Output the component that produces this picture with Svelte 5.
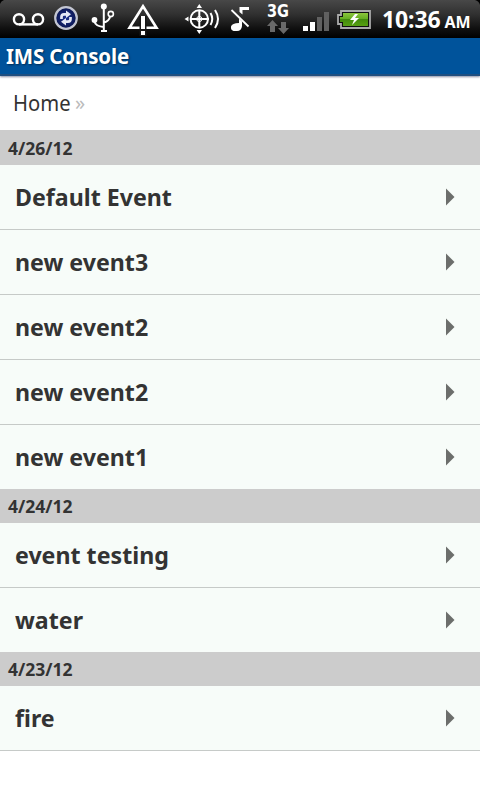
<script>
  const groups = [
    { date: '4/26/12', events: ['Default Event', 'new event3', 'new event2', 'new event2', 'new event1'] },
    { date: '4/24/12', events: ['event testing', 'water'] },
    { date: '4/23/12', events: ['fire'] }
  ];
</script>

<div class="screen">
  <div class="status">
    <svg class="icons" width="376" height="38" viewBox="0 0 376 38">
      <defs>
        <linearGradient id="charge" x1="0" y1="0" x2="0" y2="1">
          <stop offset="0" stop-color="#8cc63c" /><stop offset=".45" stop-color="#65ad22" />
          <stop offset=".5" stop-color="#438b0c" /><stop offset="1" stop-color="#56a012" />
        </linearGradient>
        <radialGradient id="globe"><stop offset="0" stop-color="#20358f" /><stop offset="1" stop-color="#0a1550" /></radialGradient>
      </defs>
      <path d="M0 0H4Q1 1 0 4Z" fill="#000" />
      <g fill="none" stroke="#fff" stroke-width="2.4">
        <circle cx="19" cy="19.3" r="5.1" /><circle cx="38" cy="19.3" r="5.1" /><path d="M19 24.4H38" />
      </g>
      <circle cx="66" cy="18" r="10.8" fill="url(#globe)" stroke="#c3c6d2" stroke-width="2.2" />
      <g fill="none" stroke="#e4e8f5" stroke-width="2.7">
        <path d="M61.500 19V17Q61.500 14.300 64 14.300H67M70.500 17V19Q70.500 21.700 68 21.700H65" />
      </g>
      <path d="M66 10.500L71 14.300L66 18ZM66 18L61 21.700L66 25.500Z" fill="#e4e8f5" />
      <g fill="none" stroke="#fff" stroke-width="2">
        <path d="M103.800 7V31M94.500 21Q95 26 103.500 27M110 17Q109 21 104 22.500" />
        <circle cx="110.800" cy="14" r="2.600" stroke-width="1.600" />
      </g>
      <circle cx="103.800" cy="6.500" r="3" fill="#fff" /><circle cx="94.500" cy="20" r="2.900" fill="#fff" />
      <path d="M101 30H107V32H101Z" fill="#fff" />
      <path d="M143 6.300L156.500 27.700H129.500Z" fill="none" stroke="#fff" stroke-width="2.600" />
      <path d="M139.500 16H146.500V36H139.500Z" fill="#171717" />
      <path d="M141 16H145V29H141ZM141 31H145V35H141Z" fill="#fff" />
      <g fill="none" stroke="#fff" stroke-width="2">
        <circle cx="199.300" cy="19" r="8.700" /><path d="M190 19H209M199.300 10V28" />
        <circle cx="199.300" cy="19" r="2.600" stroke-width="1" />
        <path d="M210.500 13Q214 19 210.500 25M215 10Q221 19 215 28" />
      </g>
      <path d="M199.300 4L202 8H196.600ZM199.300 34L202 30H196.600ZM184.500 19L188.500 16.500V21.500Z" fill="#fff" />
      <path d="M231.500 10L248.500 26.500" stroke="#fff" stroke-width="1.800" />
      <path d="M239.500 7H249V10H242.500V14.500L239.500 12ZM239 18.500L242 21.500V26Q241.500 31 237 31H233.500Q230.500 30 231 26.500Q232 23 239 23Z" fill="#fff" />
      <text x="267" y="17" textLength="22" lengthAdjust="spacingAndGlyphs" class="network">3G</text>
      <path d="M272.500 20L278 26H275V32H270V26H267ZM281 22H286V28H289L283.500 34L278 28H281Z" fill="#696969" />
      <path d="M303 26H308V31H303ZM310 22H315V31H310Z" fill="#fff" />
      <path d="M317 17H322V31H317ZM324 12H329V31H324Z" fill="#606060" />
      <path d="M341 11H370V28H341V24H338V15H341Z" fill="#111" stroke="#aaa" stroke-width="1.800" />
      <path d="M343 13H368V26H343V22H340V17H343Z" fill="url(#charge)" />
      <path d="M355 14L350 20H354L352 25L359 18H355L358 14Z" fill="#fff" />
    </svg>
    <div class="clock"><span class="time">10:36</span><span class="ampm">AM</span></div>
    <svg class="corner" width="5" height="5" viewBox="0 0 5 5"><path d="M0 0H5V5Q4 1 0 0Z" fill="#000" /></svg>
  </div>
  <header><h1>IMS Console</h1></header>
  <nav><span class="home">Home</span><span class="sep">»</span></nav>
  <main>
    {#each groups as group}
      <section>
        <h2><span>{group.date}</span></h2>
        <ul>
          {#each group.events as event}
            <li>
              <span class="name">{event}</span>
              <svg width="10" height="18" viewBox="0 0 10 18"><path d="M1 .5L9.500 9L1 17.500Z" fill="#6c6e6c" /></svg>
            </li>
          {/each}
        </ul>
      </section>
    {/each}
  </main>
</div>

<style>
  :global(body) { margin: 0; background: #fff; }
  .screen { width: 480px; height: 800px; overflow: hidden; background: #fff; color: #333; font-family: "Noto Sans", "Open Sans", sans-serif; }
  .status { position: relative; display: flex; height: 38px; background: linear-gradient(#484848, #303030 38%, #101010 75%, #000); }
  .icons { flex: none; }
  .network { fill: #fff; font: 700 17.5px "DejaVu Sans", sans-serif; }
  .corner { position: absolute; top: 0; right: 0; }
  .clock { display: flex; align-items: baseline; padding-left: 6px; color: #fff; font-weight: 700; line-height: 39px; white-space: nowrap; }
  .time { width: 62.5px; font-size: 23px; letter-spacing: -.1px; }
  .ampm { font-size: 16px; letter-spacing: -.1px; }
  header { box-sizing: border-box; height: 38px; padding-left: 6px; background: #00539b; border-bottom: 2px solid #204f80; box-shadow: 0 1px 2px #8a8fa4; }
  h1 { margin: 0; font-size: 20.5px; line-height: 36px; letter-spacing: -.15px; color: #fff; text-shadow: 1px 1px 2px #002c55; }
  nav { display: flex; align-items: center; height: 52px; padding: 0 0 2px 13px; }
  .home { width: 62px; font-size: 22px; transform: scaleX(.92); transform-origin: 0 50%; }
  .sep { font-size: 20px; color: #bbb; }
  h2 { display: flex; align-items: center; height: 34px; margin: 0; padding-left: 8px; background: #ccc; font-size: 17.5px; }
  section:first-child h2 { height: 35px; }
  ul { margin: 0; padding: 0; list-style: none; }
  li { box-sizing: border-box; display: flex; align-items: center; justify-content: space-between; height: 65px; padding: 0 25px 0 15px; background: #f7fcf9; border-bottom: 1px solid #c6cac8; }
  section:not(:last-child) li:last-child { height: 64px; border-bottom: 0; }
  .name { padding-bottom: 2px; font-size: 24px; font-weight: 700; transform: scaleX(.966); transform-origin: 0 50%; }
</style>
